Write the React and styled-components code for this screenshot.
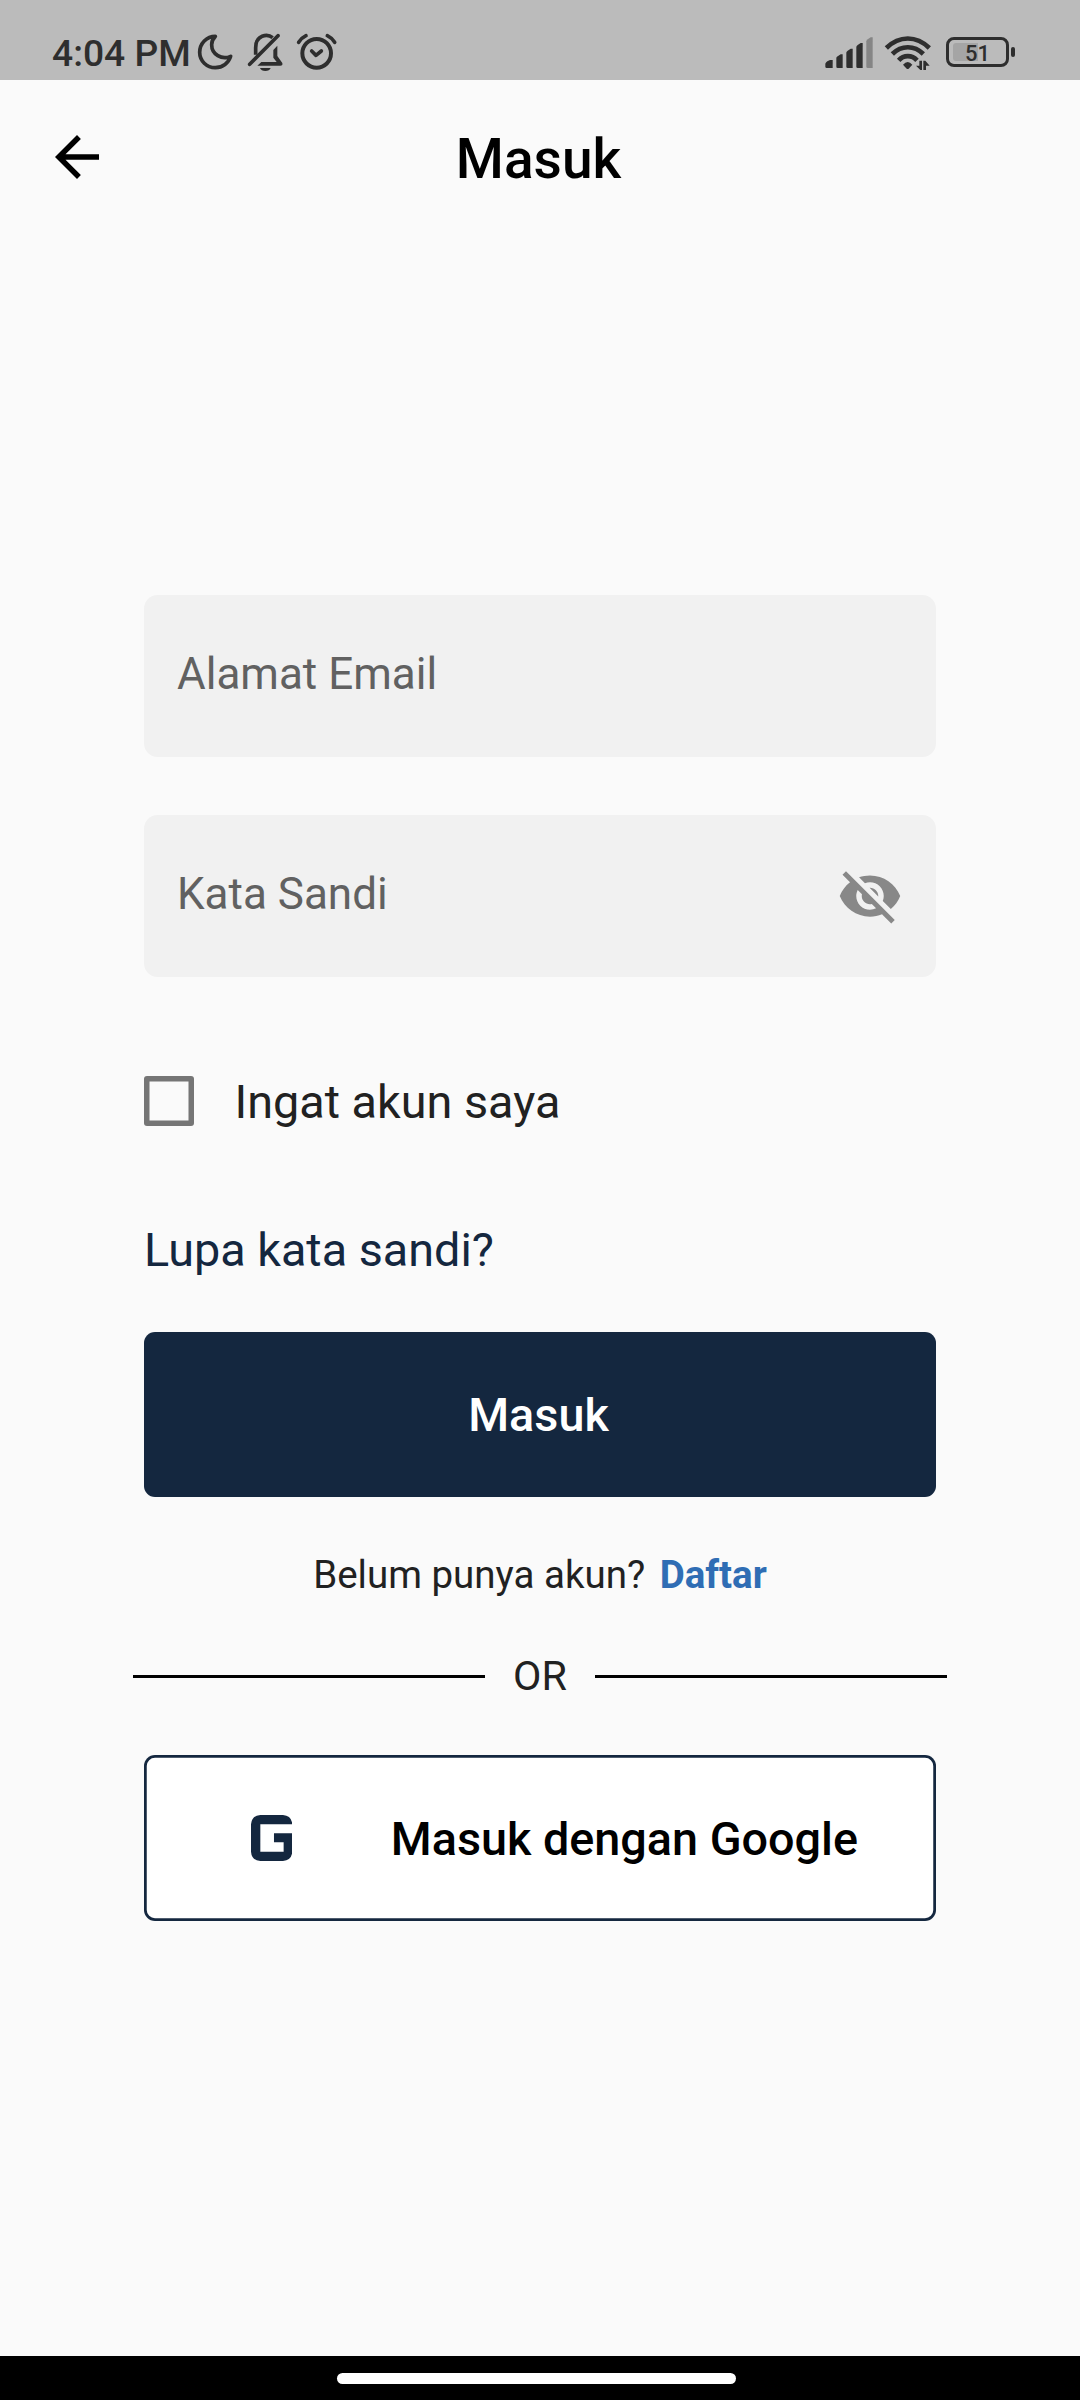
import React from "react";
import styled, { createGlobalStyle } from "styled-components";

const navy = "#14273f";
const ink = "#2e2e2e";

const GlobalStyle = createGlobalStyle`
  * { box-sizing: border-box; }
  body { margin: 0; background: #fafafa; font-family: Roboto, sans-serif; }
  button, input { font-family: inherit; }
  svg { display: block; flex: none; }
`;

const Screen = styled.div`
  width: 1080px;
  height: 2400px;
  display: flex;
  flex-direction: column;
  background: #fafafa;
  color: #212121;
  overflow: hidden;
`;

const StatusBar = styled.header`
  height: 80px;
  flex: none;
  display: flex;
  justify-content: space-between;
  padding: 0 65px 0 52px;
  background: #bbbbbb;
  color: ${ink};
`;

const StatusGroup = styled.div`
  display: flex;
  align-items: flex-start;
`;

const Clock = styled.span`
  width: 142px;
  padding-top: 31px;
  font-size: 37.2px;
  font-weight: 500;
  line-height: 44px;
  white-space: nowrap;
`;

const Connectivity = styled.div`
  display: flex;
  gap: 12px;
`;

const Battery = styled.div`
  display: flex;
  align-items: center;
  gap: 2px;
  margin: 37px 0 0 14px;
`;

const BatteryBody = styled.div`
  width: 63px;
  height: 30px;
  padding: 3px 4px;
  border: 3px solid ${ink};
  border-radius: 8px;
`;

const BatteryLevel = styled.div`
  width: 25px;
  height: 18px;
  border-radius: 3px 0 0 3px;
  background: #a5a5a5;
  padding-left: 12px;
  font-size: 22px;
  font-weight: 500;
  line-height: 21px;
  white-space: nowrap;
`;

const BatteryTip = styled.div`
  width: 4px;
  height: 10px;
  border-radius: 2px;
  background: ${ink};
`;

const AppBar = styled.div`
  height: 154px;
  flex: none;
  display: grid;
  grid-template-columns: 110px 1fr 110px;
  align-items: center;
`;

const BackButton = styled.button`
  border: 0;
  background: none;
  padding: 0 0 0 44px;
`;

const Title = styled.h1`
  margin: 0;
  padding: 3px 3px 0 0;
  text-align: center;
  color: #000;
  font-size: 55px;
  font-weight: 500;
  line-height: 64px;
`;

const Content = styled.main`
  flex: 1;
  display: flex;
  flex-direction: column;
  padding: 361px 144px 0;
`;

const Field = styled.label`
  height: 162px;
  flex: none;
  display: flex;
  align-items: center;
  justify-content: space-between;
  padding: 0 33px;
  margin-bottom: ${(p) => p.$after}px;
  border-radius: 13.75px;
  background: #f1f1f1;
`;

const Placeholder = styled.span`
  color: #616161;
  font-size: 44px;
  line-height: 52px;
  margin-bottom: 5px;
`;

const CheckRow = styled.label`
  display: flex;
  align-items: center;
  height: 50px;
  gap: 41px;
  margin-bottom: 96px;
  font-size: 46.75px;
  line-height: 56px;
`;

const CheckBox = styled.span`
  width: 49.5px;
  height: 49.5px;
  box-shadow: inset 0 0 0 5.5px #757575;
  border-radius: 3px;
`;

const CheckText = styled.span`
  padding-top: 2px;
`;

const ForgotLink = styled.a`
  color: ${navy};
  height: 56px;
  margin-bottom: 54px;
  font-size: 46.75px;
  line-height: 56px;
`;

const Button = styled.button`
  flex: none;
  height: 165px;
  display: flex;
  align-items: center;
  justify-content: center;
  padding: 0 3px 0 0;
  border: 0;
  border-radius: 11px;
  background: ${navy};
  color: #fff;
  font-size: 46.75px;
  font-weight: 500;
  line-height: 56px;
`;

const GoogleButton = styled(Button)`
  height: 165.5px;
  justify-content: flex-start;
  gap: 98.5px;
  padding: 0 0 0 107px;
  box-shadow: inset 0 0 0 2.75px ${navy};
  background: #fff;
  color: #000;
`;

const GoogleLabel = styled.span`
  padding-top: 2px;
`;

const SignUp = styled.p`
  display: flex;
  justify-content: center;
  gap: 14.5px;
  margin: 55px 0 54px;
  font-size: 38.5px;
  line-height: 46px;
`;

const SignUpLink = styled.a`
  color: #2f6db4;
  font-weight: 700;
`;

const Divider = styled.div`
  display: flex;
  align-items: center;
  gap: 28px;
  margin: 0 -11px 55.3px;
  font-size: 41.25px;
  line-height: 48px;
`;

const Rule = styled.span`
  flex: 1;
  height: 3px;
  background: #000;
`;

const NavBar = styled.footer`
  height: 44px;
  flex: none;
  display: flex;
  justify-content: center;
  padding: 17px 7px 0 0;
  background: #000;
`;

const HomePill = styled.span`
  width: 399px;
  height: 11px;
  border-radius: 6px;
  background: #fff;
`;

const StatusIcons = () => (
  <svg width="150" height="80" viewBox="492 0 450 240" fill="none" stroke={ink} strokeWidth="11" strokeLinecap="round" strokeLinejoin="round">
    <path d="M556 109C530 109 509 131 509 157C509 183 530 203 556 203C578 203 596 189 602 169C575 181 545 163 545 134C545 125 549 116 556 109Z" />
    <path d="M659 193L744 107" />
    <path d="M677 164V143C677 105 712 100 728 113" strokeLinecap="butt" />
    <path d="M730 150L742 137V168L757 189Q759 197 751 197H682L694 186H740L730 173Z" fill={ink} stroke="none" />
    <path d="M690 204H722C720 210 714 213 706 213C698 213 692 210 690 204Z" fill={ink} stroke="none" />
    <circle cx="860" cy="160" r="43" strokeWidth="12" />
    <path d="M845 153L858 166L874 153M806 127Q815 113 828 107M892 107Q905 113 914 127" />
  </svg>
);

const SignalIcon = () => (
  <svg width="48" height="80" viewBox="69 0 144 240" fill={ink} overflow="visible">
    <path d="M73 191Q74 188 79 184L87 180H95V204H77Q73 204 73 200Z" />
    <path d="M106 174Q106 171 110 169L119 163H125V204H110Q106 204 106 200Z" />
    <path d="M136 158Q136 155 140 152L149 146H155V204H140Q136 204 136 200Z" />
    <path d="M166 141Q166 138 170 135L179 129H185V204H170Q166 204 166 200Z" />
    <path d="M196 124Q196 121 200 118L209 112H215V204H200Q196 204 196 200Z" fill="#858585" />
  </svg>
);

const WifiIcon = () => (
  <svg width="48" height="80" viewBox="252 0 144 240" fill="none" stroke={ink} strokeWidth="14">
    <path d="M259 144C298 106 349 106 388 144M277 162C304 135 343 135 370 162M296 181C311 164 336 164 351 181" />
    <path d="M309 194Q323 178 337 194L326 206Q323 208 320 206Z" fill={ink} stroke="none" />
    <path d="M366 182V210H361L348 197H358V182ZM370 210V182H376L389 197H378V210Z" fill={ink} stroke="none" />
  </svg>
);

const BackIcon = () => (
  <svg width="66" height="66" viewBox="0 0 24 24">
    <path d="M20 11H7.83l5.59-5.59L12 4l-8 8 8 8 1.41-1.41L7.83 13H20v-2z" />
  </svg>
);

const EyeOffIcon = () => (
  <svg width="66" height="66" viewBox="0 0 24 24" fill="#888">
    <path d="M12 7c2.76 0 5 2.24 5 5 0 .65-.13 1.26-.36 1.83l2.92 2.92c1.51-1.26 2.7-2.89 3.43-4.75-1.73-4.39-6-7.5-11-7.5-1.4 0-2.74.25-3.98.7l2.16 2.16C10.74 7.13 11.35 7 12 7zM2 4.27l2.28 2.28.46.46C3.08 8.3 1.78 10.02 1 12c1.73 4.39 6 7.5 11 7.5 1.55 0 3.03-.3 4.38-.84l.42.42L19.73 22 21 20.73 3.27 3 2 4.27zM7.53 9.8l1.55 1.55c-.05.21-.08.43-.08.65 0 1.66 1.34 3 3 3 .22 0 .44-.03.65-.08l1.55 1.55c-.67.33-1.41.53-2.2.53-2.76 0-5-2.24-5-5 0-.79.2-1.53.53-2.2zm4.31-.78l3.15 3.15.02-.16c0-1.66-1.34-3-3-3l-.17.01z" />
  </svg>
);

const GoogleMark = () => (
  <svg width="41.3" height="46" viewBox="0 0 124 138" fill={navy}>
    <path d="M28 0H96Q122 2 124 28H28V110H98V82H69V55H124V110Q122 136 96 138H28Q2 136 0 110V28Q2 2 28 0Z" />
  </svg>
);

export default function App() {
  return (
    <Screen>
      <GlobalStyle />
      <StatusBar>
        <StatusGroup>
          <Clock>4:04 PM</Clock>
          <StatusIcons />
        </StatusGroup>
        <StatusGroup>
          <Connectivity>
            <SignalIcon />
            <WifiIcon />
          </Connectivity>
          <Battery>
            <BatteryBody>
              <BatteryLevel>51</BatteryLevel>
            </BatteryBody>
            <BatteryTip />
          </Battery>
        </StatusGroup>
      </StatusBar>
      <AppBar>
        <BackButton>
          <BackIcon />
        </BackButton>
        <Title>Masuk</Title>
      </AppBar>
      <Content>
        <Field $after={58}>
          <Placeholder>Alamat Email</Placeholder>
        </Field>
        <Field $after={99}>
          <Placeholder>Kata Sandi</Placeholder>
          <EyeOffIcon />
        </Field>
        <CheckRow>
          <CheckBox />
          <CheckText>Ingat akun saya</CheckText>
        </CheckRow>
        <ForgotLink>Lupa kata sandi?</ForgotLink>
        <Button>Masuk</Button>
        <SignUp>
          Belum punya akun?
          <SignUpLink>Daftar</SignUpLink>
        </SignUp>
        <Divider>
          <Rule />
          OR
          <Rule />
        </Divider>
        <GoogleButton>
          <GoogleMark />
          <GoogleLabel>Masuk dengan Google</GoogleLabel>
        </GoogleButton>
      </Content>
      <NavBar>
        <HomePill />
      </NavBar>
    </Screen>
  );
}
